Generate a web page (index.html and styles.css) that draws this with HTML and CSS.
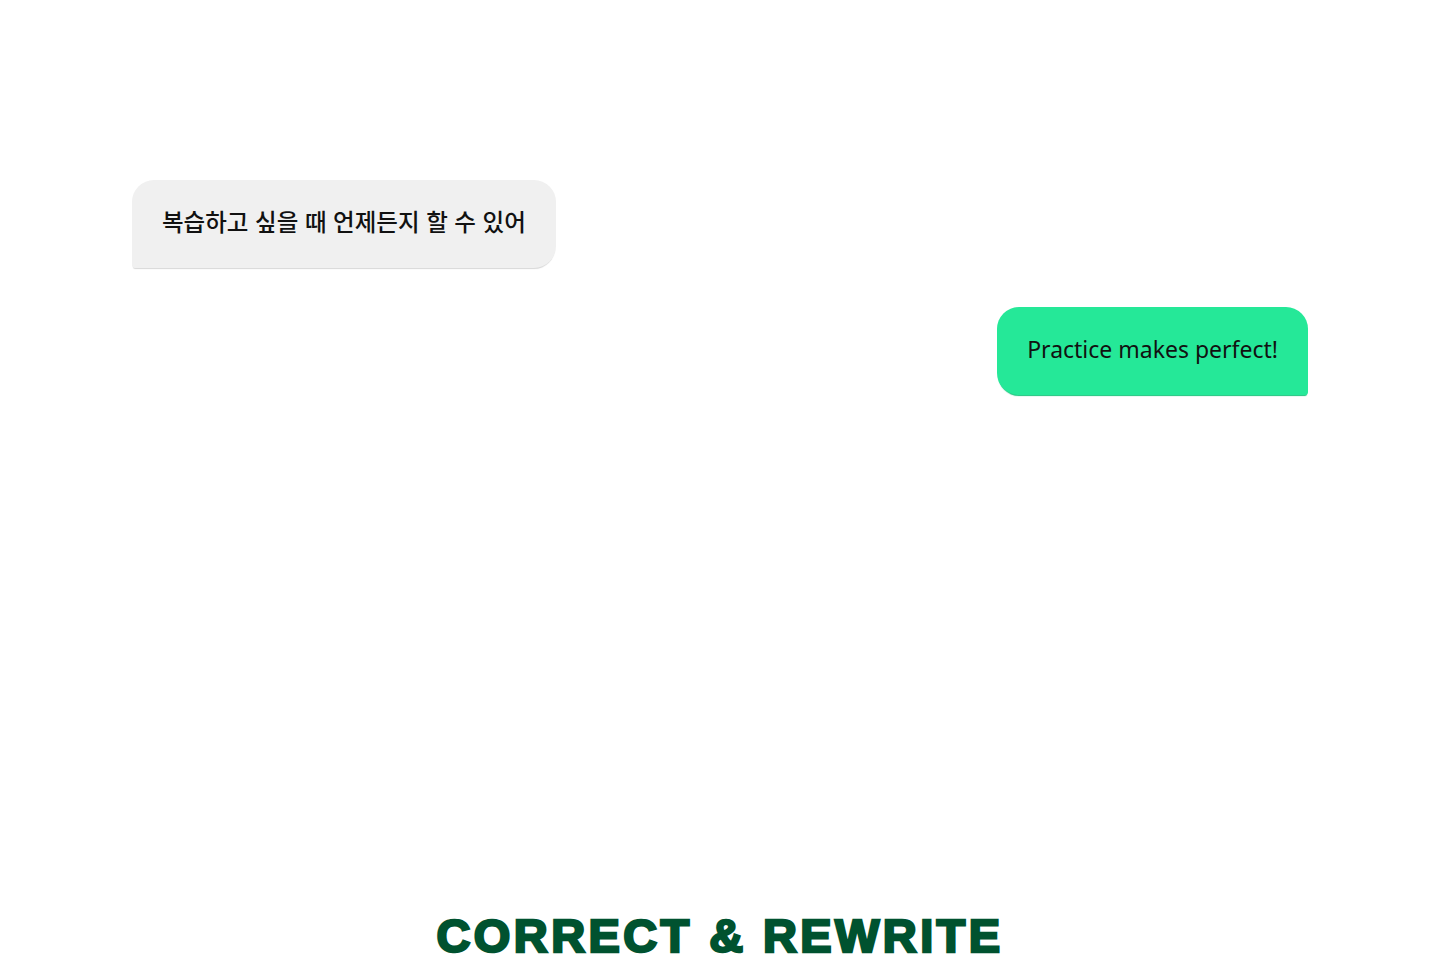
FILE: index.html
```html
<!DOCTYPE html>
<html lang="ko">
<head>
<meta charset="utf-8">
<link rel="stylesheet" href="styles.css">
</head>
<body>
<main class="page">
  <section class="chat">
    <div class="row row-left">
      <div class="bubble bubble-gray">복습하고 싶을 때 언제든지 할 수 있어</div>
    </div>
    <div class="row row-right">
      <div class="bubble bubble-green">Practice makes perfect!</div>
    </div>
  </section>
  <h1 class="title">CORRECT &amp; REWRITE</h1>
</main>
</body>
</html>
```
FILE: styles.css
```css
* { box-sizing: border-box; }
html, body { margin: 0; padding: 0; background: #fff; }
.page {
  width: 1440px;
  height: 980px;
  display: flex;
  flex-direction: column;
  padding: 180px 132px 0;
}
.chat {
  display: flex;
  flex-direction: column;
  gap: 39px;
  flex: 1;
}
.row { display: flex; }
.row-left { justify-content: flex-start; }
.row-right { justify-content: flex-end; }
.bubble {
  height: 88px;
  display: flex;
  align-items: center;
  padding: 0 30px 6px;
  font-family: "Noto Sans", "Noto Sans CJK KR", sans-serif;
  font-size: 23px;
  color: #111;
  border-radius: 22px;
}
.bubble-gray {
  background: #f0f0f0;
  border-bottom-left-radius: 3px;
  box-shadow: 0 2px 1px -1px #d8d8d8;
  font-family: "Noto Sans CJK KR", sans-serif;
  font-size: 23.5px;
  font-weight: 500;
  padding-bottom: 7px;
}
.bubble-green {
  background: #25e898;
  border-bottom-right-radius: 3px;
  box-shadow: 0 2px 1px -1px #1cc47d;
  padding-bottom: 5px;
}
.title {
  margin: 0 0 16px;
  text-align: center;
  font-family: "Liberation Sans", sans-serif;
  font-weight: 900;
  font-size: 47px;
  letter-spacing: 3.4px;
  color: #00522f;
  -webkit-text-stroke: 2.5px #00522f;
  line-height: 56px;
}
```
